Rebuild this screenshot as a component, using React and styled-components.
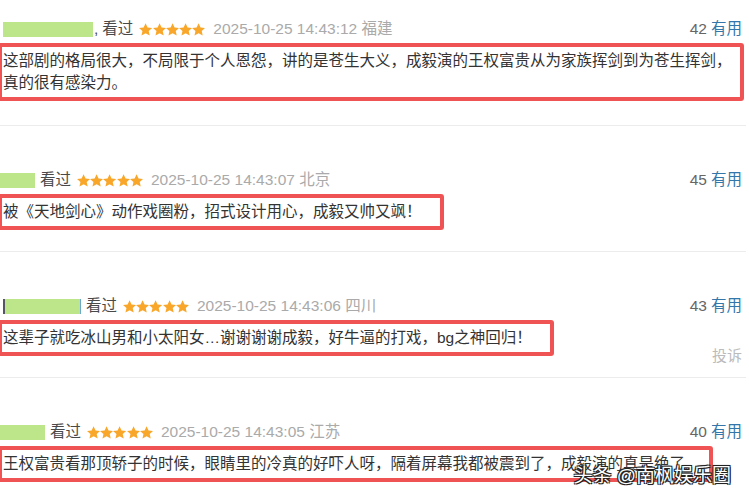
import React from 'react';
import styled, { createGlobalStyle } from 'styled-components';

const GlobalStyle = createGlobalStyle`
  html, body {
    margin: 0;
    padding: 0;
    background: #fff;
  }
  body {
    font-family: "Liberation Sans", "Noto Sans CJK SC", sans-serif;
    color: #333;
  }
`;

// pad: right padding of the hand-drawn highlight box around each comment
const reviews = [
  {
    id: 1,
    userWidth: 90,
    userOffset: 3,
    comma: true,
    time: '2025-10-25 14:43:12',
    place: '福建',
    votes: 42,
    pad: 6,
    text: '这部剧的格局很大，不局限于个人恩怨，讲的是苍生大义，成毅演的王权富贵从为家族挥剑到为苍生挥剑，真的很有感染力。',
  },
  {
    id: 2,
    userWidth: 35,
    userOffset: 0,
    time: '2025-10-25 14:43:07',
    place: '北京',
    votes: 45,
    pad: 18,
    text: '被《天地剑心》动作戏圈粉，招式设计用心，成毅又帅又飒！',
  },
  {
    id: 3,
    userWidth: 75,
    userOffset: 3,
    cut: true,
    time: '2025-10-25 14:43:06',
    place: '四川',
    votes: 43,
    pad: 18,
    report: true,
    text: '这辈子就吃冰山男和小太阳女…谢谢谢谢成毅，好牛逼的打戏，bg之神回归！',
  },
  {
    id: 4,
    userWidth: 45,
    userOffset: 0,
    time: '2025-10-25 14:43:05',
    place: '江苏',
    votes: 40,
    pad: 8,
    text: '王权富贵看那顶轿子的时候，眼睛里的冷真的好吓人呀，隔着屏幕我都被震到了，成毅演的真是绝了。',
  },
];

const Page = styled.div`
  position: relative;
  width: 749px;
  height: 502px;
  overflow: hidden;
`;

const List = styled.div`
  display: flex;
  flex-direction: column;
  padding-right: 3px;
`;

const Item = styled.div`
  padding: ${props => (props.$first ? '19px 0 24px' : '44px 0 21px')};
  border-bottom: 1px solid ${props => (props.$last ? 'transparent' : '#ececec')};
`;

const Meta = styled.div`
  display: flex;
  align-items: center;
  height: 20px;
  font-size: 15.5px;
  line-height: 20px;
  white-space: nowrap;
`;

const User = styled.span`
  display: inline-block;
  width: ${props => props.$w}px;
  height: 15px;
  margin-left: ${props => props.$ml}px;
  margin-right: 5px;
  background: #bde68a;
  border-left: ${props => (props.$cut ? '2px solid #556' : 'none')};
  border-right: ${props => (props.$cut ? '1px solid #6aa7d8' : 'none')};
`;

const Comma = styled.span`
  margin-left: -4px;
  margin-right: 4px;
  color: #494949;
`;

const Watched = styled.span`
  color: #494949;
  margin-right: 6px;
`;

const Stars = styled.span`
  display: inline-flex;
  margin-right: 8px;
`;

const Time = styled.span`
  color: #aaa;
`;

const Votes = styled.span`
  margin-left: auto;
  color: #666;
  padding-right: 4px;
`;

const Useful = styled.span`
  color: #3377aa;
  margin-left: 4px;
`;

const ContentRow = styled.div`
  display: flex;
  align-items: flex-end;
  justify-content: space-between;
  margin-top: 4px;
`;

const Highlight = styled.span`
  display: inline-block;
  max-width: 100%;
  box-sizing: border-box;
  margin-left: -2px;
  padding: 3px ${props => props.$pad}px 3px 1px;
  border: 4px solid #ef5353;
  border-radius: 3px;
  font-size: 15.5px;
  line-height: 22px;
  color: #333;
`;

const Report = styled.span`
  font-size: 15px;
  color: #bbb;
  margin-bottom: -9px;
  padding-right: 4px;
`;

const Watermark = styled.div`
  position: absolute;
  right: 18px;
  bottom: 15px;
  font-size: 19px;
  line-height: 22px;
  color: #fff;
  font-family: "Liberation Sans", "Noto Sans CJK SC", sans-serif;
  text-shadow:
    -1px -1px 0 #222, 1px -1px 0 #222, -1px 1px 0 #222, 1px 1px 0 #222,
    0 0 2px #000;
`;

const Star = () => (
  <svg width="13.2" height="13" viewBox="0 0 24 23">
    <path
      d="M12 0l3.6 7.7 8.4.9-6.3 5.7 1.8 8.3L12 18.4 4.5 22.6l1.8-8.3L0 8.6l8.4-.9z"
      fill="#f9a72b"
    />
  </svg>
);

const Review = ({ review, first, last }) => (
  <Item $first={first} $last={last}>
    <Meta>
      <User $w={review.userWidth} $ml={review.userOffset} $cut={review.cut} />
      {review.comma && <Comma>,</Comma>}
      <Watched>看过</Watched>
      <Stars>
        {[0, 1, 2, 3, 4].map(i => <Star key={i} />)}
      </Stars>
      <Time>{review.time} {review.place}</Time>
      <Votes>
        {review.votes}
        <Useful>有用</Useful>
      </Votes>
    </Meta>
    <ContentRow>
      <Highlight $pad={review.pad}>{review.text}</Highlight>
      {review.report && <Report>投诉</Report>}
    </ContentRow>
  </Item>
);

const App = () => (
  <Page>
    <GlobalStyle />
    <List>
      {reviews.map((review, i) => (
        <Review
          key={review.id}
          review={review}
          first={i === 0}
          last={i === reviews.length - 1}
        />
      ))}
    </List>
    <Watermark>头条 @南枫娱乐圈</Watermark>
  </Page>
);

export default App;
